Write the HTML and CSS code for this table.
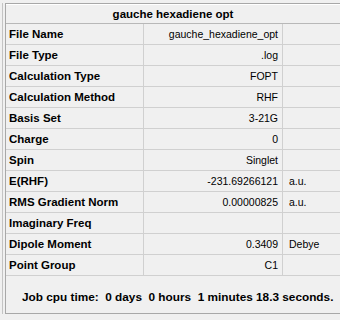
FILE: index.html
```html
<!DOCTYPE html>
<html>
<head>
<meta charset="utf-8">
<link rel="stylesheet" href="styles.css">
</head>
<body>
<div class="panel">
  <div class="inner">
    <div class="title">gauche hexadiene opt</div>
    <div class="grid">
      <div class="lab">File Name</div><div class="val">gauche_hexadiene_opt</div><div class="unit"></div>
      <div class="lab">File Type</div><div class="val">.log</div><div class="unit"></div>
      <div class="lab">Calculation Type</div><div class="val">FOPT</div><div class="unit"></div>
      <div class="lab">Calculation Method</div><div class="val">RHF</div><div class="unit"></div>
      <div class="lab">Basis Set</div><div class="val">3-21G</div><div class="unit"></div>
      <div class="lab">Charge</div><div class="val">0</div><div class="unit"></div>
      <div class="lab">Spin</div><div class="val">Singlet</div><div class="unit"></div>
      <div class="lab">E(RHF)</div><div class="val">-231.69266121</div><div class="unit">a.u.</div>
      <div class="lab">RMS Gradient Norm</div><div class="val">0.00000825</div><div class="unit">a.u.</div>
      <div class="lab">Imaginary Freq</div><div class="val"></div><div class="unit"></div>
      <div class="lab">Dipole Moment</div><div class="val">0.3409</div><div class="unit">Debye</div>
      <div class="lab">Point Group</div><div class="val">C1</div><div class="unit"></div>
    </div>
    <div class="footer">Job cpu time:&nbsp; 0 days&nbsp; 0 hours&nbsp; 1 minutes 18.3 seconds.</div>
  </div>
</div>
</body>
</html>
```

FILE: styles.css
```css
html, body {
  margin: 0;
  padding: 0;
  background: #f0f0f0;
  width: 340px;
  height: 320px;
  overflow: hidden;
}
.panel {
  margin: 3px 0 0 2px;
  border-left: 1px solid #c4c4c4;
  padding-left: 2px;
  font-family: "Liberation Sans", Arial, sans-serif;
  font-size: 11px;
  color: #000;
}
.inner {
  border-left: 1px solid #a8a8a8;
  border-top: 1px solid #a8a8a8;
  border-bottom: 1px solid #a8a8a8;
  height: 309px;
}
.title {
  height: 18px;
  line-height: 18px;
  text-align: center;
  font-weight: bold;
  font-size: 11.5px;
  border-top: 1px solid #fff;
  border-bottom: 1px solid #b8b8b8;
}
.grid {
  display: grid;
  grid-template-columns: 138px 139px 1fr;
  grid-auto-rows: 21px;
}
.grid > div {
  border-bottom: 1px solid #d0d0d0;
  line-height: 20px;
  white-space: nowrap;
}
.lab {
  font-weight: bold;
  font-size: 11.5px;
  padding-left: 3px;
  border-right: 1px solid #d0d0d0;
}
.val {
  text-align: right;
  font-size: 10.5px;
  padding-right: 4px;
  border-right: 1px solid #d0d0d0;
}
.unit {
  padding-left: 6px;
  font-size: 10.5px;
}
.footer {
  font-weight: bold;
  font-size: 11.8px;
  white-space: nowrap;
  padding: 14px 0 0 16px;
}
```
